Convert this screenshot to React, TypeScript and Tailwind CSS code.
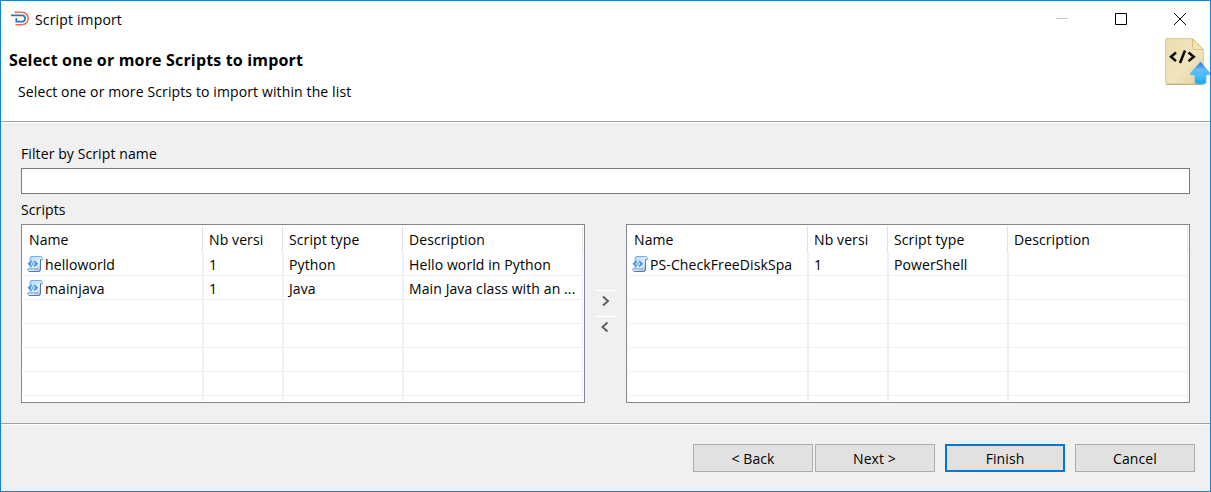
import type { ReactNode } from "react";

type Script = { name: string; versions: string; type: string; description: string };

const available: Script[] = [
  { name: "helloworld", versions: "1", type: "Python", description: "Hello world in Python" },
  { name: "mainjava", versions: "1", type: "Java", description: "Main Java class with an ..." },
];
const selected: Script[] = [
  { name: "PS-CheckFreeDiskSpa", versions: "1", type: "PowerShell", description: "" },
];

function Logo() {
  return (
    <svg width="20" height="16" viewBox="0 0 20 16" fill="none">
      <path d="M4.500 1.300H12a6.200 6.200 0 0 1 0 12.400H5.500" stroke="#ec6a5a" strokeWidth="1.500" />
      <path d="M1 4.400h11.500a3.200 3.200 0 0 1 0 6.300H6.300V7" stroke="#2f78a4" strokeWidth="1.700" />
    </svg>
  );
}

function ScriptIcon() {
  return (
    <svg width="16" height="16" viewBox="0 0 16 16" className="shrink-0">
      <defs>
        <linearGradient id="paper" x1="0" y1="0" x2="1" y2="1">
          <stop offset="0" stopColor="#a9d4f7" />
          <stop offset="0.6" stopColor="#e4f2ff" />
          <stop offset="1" stopColor="#7ea6d4" />
        </linearGradient>
      </defs>
      <path d="M4 .5h10q1.600.3 1.500 3.300h-2v9.200q0 2.400-1.800 2.500H2.200Q.6 15.300.6 12.800H3V2.500Q3 .8 4 .5Z" fill="url(#paper)" stroke="#79afe2" />
      <path d="M13.500 3.300V13q0 2.300-1.800 2.500H2.200" fill="none" stroke="#5577ad" />
      <path d="M4.800 3.900 0.400 7.700l4.400 3.900V9.400L3.600 7.700l1.200-1.600ZM7 3.900l4.400 3.800L7 11.600V9.400l1.200-1.700L7 6.100Z" fill="#4a98e4" />
      <path d="M5.900 5.900v3.700" stroke="#83bbf0" strokeWidth="1.800" />
      <path d="M3 13h8" stroke="#6e9fd2" />
    </svg>
  );
}

function ScriptFileIcon() {
  return (
    <svg width="46" height="50" viewBox="0 0 46 50" className="relative left-px top-px">
      <defs>
        <linearGradient id="sheet" x1="0" y1="0" x2="1" y2="1">
          <stop offset="0" stopColor="#e9dcae" />
          <stop offset="0.55" stopColor="#f1e5c0" />
          <stop offset="1" stopColor="#e0d196" />
        </linearGradient>
        <linearGradient id="arrow" x1="0" y1="0" x2="0" y2="1">
          <stop offset="0" stopColor="#1b69dc" />
          <stop offset="0.35" stopColor="#65bdfb" />
          <stop offset="0.7" stopColor="#48baff" />
          <stop offset="1" stopColor="#12a5f2" />
        </linearGradient>
      </defs>
      <path d="M1 46.500h37.500" fill="none" stroke="#a39c84" strokeWidth="1.200" />
      <path d="M2 .6H27.500L38.300 11.500V44.400q0 1.500-1.500 1.500H2Q.6 45.900.6 44.400V2Q.6 .6 2 .6Z" fill="url(#sheet)" stroke="#dccb8e" />
      <path d="M27.500.8V9.500q0 2 2 2h8.800Z" fill="#f2e5b7" stroke="#d5c27e" />
      <path d="M11 14.500 6 18.800l5 4.300M23.500 14.500l5.300 4.300-5.300 4.300M20 12.500l-5 12.500" fill="none" stroke="#080808" strokeWidth="2.500" />
      <path d="M35.500 23.900 44.800 35q.3 1.700-1 1.700H41V44q0 1.800-2 1.800h-7q-2 0-2-1.800V36.700H26.600q-1.800 0-.8-1.800Z" fill="url(#arrow)" stroke="#4bacf0" strokeWidth=".7" />
    </svg>
  );
}

const columns = "grid grid-cols-[180px_80px_120px_180px] w-[560px]";

function HeaderCell({ children }: { children: ReactNode }) {
  return (
    <div className="h-[26px] border-r border-[#e3e3e3] pl-[6px] leading-[27px]">{children}</div>
  );
}

function Cell({ children }: { children?: ReactNode }) {
  return <div className="h-[23px] overflow-hidden whitespace-nowrap pl-[6px] leading-[25px]">{children}</div>;
}

function ScriptTable({ rows }: { rows: Script[] }) {
  const slots = Array.from({ length: 6 }, (_, i) => rows[i]);
  return (
    <div className="relative h-[179px] w-[564px] border border-[#828790] bg-white p-px">
      <div className={columns}>
        <HeaderCell>Name</HeaderCell>
        <HeaderCell>Nb versi</HeaderCell>
        <HeaderCell>Script type</HeaderCell>
        <HeaderCell>Description</HeaderCell>
      </div>
      {slots.map((row, i) => (
        <div key={i} className={`${columns} h-6 border-b border-[#f0f0f0]`}>
          {row && (
            <>
              <div className="flex h-[23px] items-center gap-[2px] pl-1">
                <ScriptIcon />
                <span className="pt-[2px] leading-[23px]">{row.name}</span>
              </div>
              <Cell>{row.versions}</Cell>
              <Cell>{row.type}</Cell>
              <Cell>{row.description}</Cell>
            </>
          )}
        </div>
      ))}
      <div className={`${columns} pointer-events-none absolute left-px top-[27px] h-[149px]`}>
        <div className="-mr-px border-r-2 border-[#ecf2fb]" />
        <div className="-mr-px border-r-2 border-[#ecf2fb]" />
        <div className="-mr-px border-r-2 border-[#ecf2fb]" />
        <div className="border-r border-[#ecf2fb]" />
      </div>
    </div>
  );
}

function Button({ children, primary }: { children: ReactNode; primary?: boolean }) {
  return (
    <button
      className={`flex h-7 w-[120px] items-center justify-center bg-[#e1e1e1] ${
        primary ? "border-2 border-[#0078d7]" : "border border-[#adadad]"
      }`}
    >
      {children}
    </button>
  );
}

export default function App() {
  return (
    <div className="flex h-[492px] w-[1211px] flex-col overflow-hidden border border-[#1a80d2] bg-[#f0f0f0] font-['Open_Sans',sans-serif] text-[14px] tracking-[0.1px] text-black">
      <header className="flex h-[120px] shrink-0 flex-col bg-white">
        <div className="flex h-[36px] items-center pl-[9px]">
          <Logo />
          <span className="ml-[5px] tracking-[0.15px]">Script import</span>
          <div className="ml-auto mr-[24px] flex items-center gap-[47px]">
            <svg width="12" height="12"><path d="M0 5.500h12" stroke="#c8c8c8" /></svg>
            <svg width="12" height="12"><path d="M.5.5h11v11H.5Z" fill="none" stroke="#000" /></svg>
            <svg width="12" height="12"><path d="m0 0 12 12M12 0 0 12" stroke="#000" /></svg>
          </div>
        </div>
        <div className="flex justify-between">
          <div className="pl-2 pt-[13px]">
            <h1 className="text-[16px] font-bold leading-[21px] tracking-[0.17px]">Select one or more Scripts to import</h1>
            <p className="ml-[9px] mt-[11px] leading-5 tracking-[0.12px]">Select one or more Scripts to import within the list</p>
          </div>
          <ScriptFileIcon />
        </div>
      </header>
      <div className="h-[2px] shrink-0 border-t border-[#a0a0a0] bg-white" />
      <main className="flex h-[300px] shrink-0 flex-col px-5">
        <label className="mt-[20px] leading-[22px]">Filter by Script name</label>
        <input className="mt-[3px] h-[26px] w-full border border-[#7a7a7a] bg-white px-2 outline-none" />
        <div className="mt-[5px] h-[25px] leading-[22px]">Scripts</div>
        <div className="flex justify-between">
          <ScriptTable rows={available} />
          <div className="mt-[66px] flex w-[21px] flex-col">
            <button className="flex h-[26px] justify-center border-t border-white pr-[2px] pt-[5px]">
              <svg width="10" height="10"><path d="M3 .500 8 5 3 9.500" fill="none" stroke="#606060" strokeWidth="2" /></svg>
            </button>
            <button className="flex h-[26px] justify-center border-t border-white pr-[2px] pt-[5px]">
              <svg width="10" height="10"><path d="M7.500.5 2.500 5l5 4.500" fill="none" stroke="#606060" strokeWidth="2" /></svg>
            </button>
          </div>
          <ScriptTable rows={selected} />
        </div>
      </main>
      <div className="h-[2px] shrink-0 border-t border-[#a0a0a0] bg-white" />
      <footer className="flex justify-end gap-[10px] pr-[15px] pt-[19px]">
        <div className="flex gap-[2px]">
          <Button>{"< Back"}</Button>
          <Button><span className="-ml-px">{"Next >"}</span></Button>
        </div>
        <Button primary>Finish</Button>
        <Button>Cancel</Button>
      </footer>
    </div>
  );
}
